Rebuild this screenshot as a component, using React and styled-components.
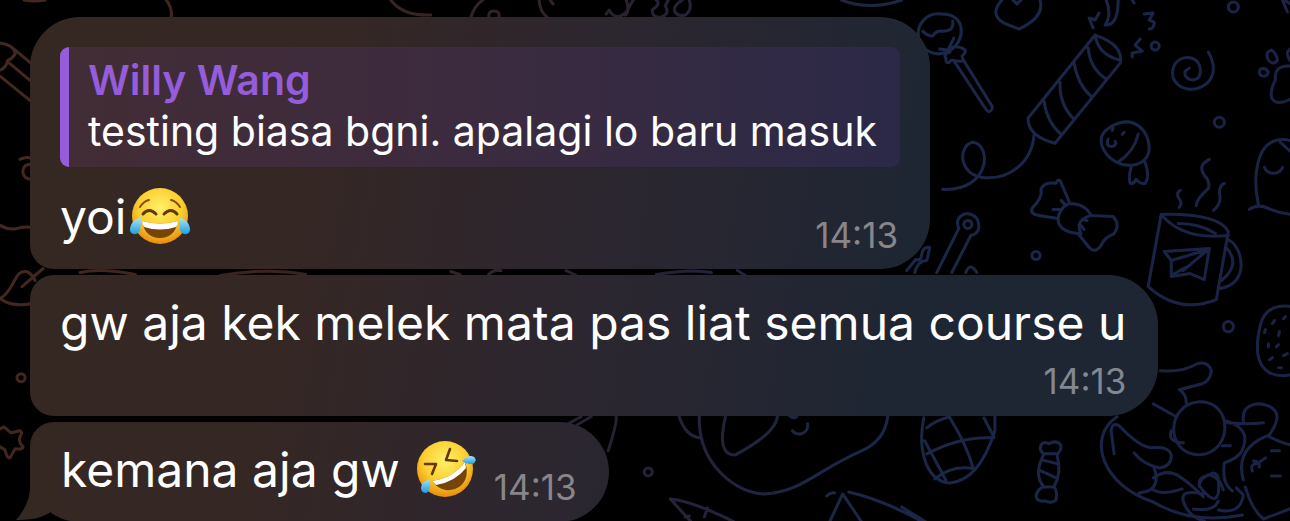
import React from 'react'
import styled, { createGlobalStyle, css } from 'styled-components'

const GlobalStyle = createGlobalStyle`
  * {
    box-sizing: border-box;
  }

  html,
  body {
    background: #000;
    margin: 0;
    overflow: hidden;
  }

  body {
    font-family: Inter, 'Liberation Sans', sans-serif;
  }
`

const Chat = styled.main`
  min-height: 100vh;
  overflow: hidden;
  position: relative;
`

const Wallpaper = styled.svg`
  fill: none;
  height: 100%;
  inset: 0;
  position: absolute;
  stroke: url(#ink);
  stroke-linecap: round;
  stroke-linejoin: round;
  stroke-width: 3;
  width: 100%;
`

const Messages = styled.ol`
  align-items: flex-start;
  display: flex;
  flex-direction: column;
  gap: 6px;
  list-style: none;
  margin: 0;
  padding: 17px 30px 0;
  position: relative;
`

// The gradient is attached to the viewport so that it runs on from bubble to bubble
const bubbleFill = css`
  background: linear-gradient(100deg, #352822 0%, #352724 24%, #2c2630 46%, #1f2633 68%, #1e2533 100%) fixed;
`

const Bubble = styled.li`
  ${bubbleFill}
  border-radius: ${({ $radius }) => $radius};
  color: #fff;
  display: flex;
  flex-direction: ${({ $inline }) => ($inline ? 'row' : 'column')};
  padding: ${({ $inline }) => ($inline ? '0 32px 0 31px' : '0 32px 0 30px')};
  position: relative;
`

const Tail = styled.span`
  ${bubbleFill}
  clip-path: path('M16 40V66C16 76 11 88 2 98C17 98 29 96 38 89V40Z');
  height: 100px;
  left: -16px;
  position: absolute;
  top: 0;
  width: 40px;
`

const Quote = styled.blockquote`
  background: linear-gradient(90deg, #422c35, #3c2b3f 48%, #2b2947);
  border-left: 9px solid #955cdb;
  border-radius: 9px;
  margin: 30px 0 0;
  padding: 9px 23px 9px 19px;
`

const Author = styled.cite`
  color: #955cdb;
  display: block;
  font-size: 41px;
  font-style: normal;
  font-weight: 600;
  line-height: 49px;
`

const QuoteText = styled.p`
  font-size: 41px;
  line-height: 53px;
  margin: 0;
`

const Text = styled.p`
  align-items: center;
  display: flex;
  font-size: 48px;
  gap: ${({ $gap }) => $gap || '0'};
  line-height: 96px;
  margin: 0;
  padding-bottom: 4px;
`

const Time = styled.time`
  color: ${({ $cool }) => ($cool ? '#828790' : '#89868b')};
  font-size: 35px;
  line-height: 40px;
`

const Footer = styled.div`
  align-items: flex-end;
  display: flex;
  justify-content: space-between;
`

const EmojiArt = styled.svg`
  display: block;
  height: 60px;
  width: 60px;
`

function Joy() {
  return (
    <EmojiArt viewBox="0 0 60 60" role="img" aria-label="face with tears of joy">
      <circle cx="30" cy="29" r="28" fill="url(#face)" />
      <path d="M10 20Q14 14 19 13M50 20Q46 14 41 13" fill="none" stroke="#8a4b08" strokeWidth="2" strokeLinecap="round" />
      <path d="M13 27Q19 20 26 27M34 27Q41 20 47 27" fill="none" stroke="#65370c" strokeWidth="3" strokeLinecap="round" />
      <path d="M12 34Q30 39 48 34C46 46 39 51 30 51S14 46 12 34Z" fill="#764309" />
      <path d="M12 34Q30 39 48 34Q48 38 46 40Q30 45 14 40Q12 37 12 34Z" fill="#fff" />
      <path d="M11 31C3 32 0 38 0 43C0 48 8 49 10 43Q11 38 11 31Z" fill="url(#tear)" />
      <path d="M49 31C57 32 60 38 60 43C60 48 52 49 50 43Q49 38 49 31Z" fill="url(#tear)" />
    </EmojiArt>
  )
}

function Rofl() {
  return (
    <EmojiArt viewBox="0 0 60 60" role="img" aria-label="rolling on the floor laughing">
      <circle cx="29" cy="29" r="28" fill="url(#face)" />
      <path d="M9 24L20 24L16 34M34 9L30 20L41 21" fill="none" stroke="#65370c" strokeWidth="2.6" strokeLinecap="round" strokeLinejoin="round" />
      <path d="M16 41Q37 38 49 22C54 36 48 46 39 49S22 49 16 41Z" fill="#764309" />
      <path d="M16 41Q37 38 49 22L50 28Q39 42 20 45Z" fill="#fff" />
      <path d="M46 21Q53 14 58 17C62 20 58 25 54 24Q50 24 46 21Z" fill="url(#tear)" />
      <path d="M14 39Q5 42 5 48C5 53 11 55 13 50Q15 45 14 39Z" fill="url(#tear)" />
    </EmojiArt>
  )
}

const DOTS = [
  [1231, 7, 5],
  [1153, 46, 4],
  [1217, 122, 5],
  [1034, 255, 4],
  [1226, 326, 5],
  [647, 471, 4],
  [21, 377, 4],
]

const DOODLES = [
  // pencil, face and leaf on the left edge
  'M0 43Q16 46 15 54Q12 59 8 60Q6 68 0 70M14 49L32 64M7 61L32 82M0 76L32 102',
  'M20 159Q26 156 31 158M31 164Q22 164 23 173Q24 178 31 179M0 225Q9 230 17 228T32 227',
  'M0 298C15 290 14 269 26 271Q31 272 35 280M0 298Q12 307 32 303M22 286L43 268',
  'M0 428L4 426L11 432L20 430Q23 431 20 436Q18 441 23 446Q23 449 15 448L10 457Q7 458 5 449L0 446',
  // bits over the first bubble
  'M166 0Q172 8 171 17M390 0Q402 16 430 15M24 0Q34 2 45 0M470 17Q474 5 482 0M488 17Q487 11 493 11Q499 11 498 17',
  'M538 0Q539 12 546 17M549 0L552 4M605 14L608 10Q615 22 625 12L632 0M625 0Q629 11 624 15M655 0Q660 4 651 10Q651 18 660 17Q669 14 664 6L667 0M681 0Q673 5 673 10Q675 17 684 15Q691 10 688 0M840 0Q868 11 900 0',
  // lollipop
  'M940 14A20 20 0 1 0 948 50C963 43 966 14 940 14ZM951 21Q952 33 938 31Q933 32 931 36Q925 36 921 31M938 49L946 50L952 38M949 48Q955 45 962 49Q966 51 960 56Q963 62 957 61L950 60Q944 66 944 58Q941 54 948 52ZM953 62L984 109Q987 114 990 109Q991 107 989 104L961 59',
  // heart
  'M1000 0Q987 14 1002 23L1017 29Q1043 17 1038 0M1011 0L1015 4L1019 0',
  // party popper and streamers
  'M1093 35L1026 118Q1026 136 1053 143L1118 63Q1122 45 1093 35ZM1093 35Q1096 55 1118 60M1086 48Q1088 68 1103 78M1072 63Q1076 85 1089 96M1058 82Q1057 104 1072 119M1042 101Q1045 122 1059 134M1032 135C1030 160 1009 181 979 177C957 173 956 145 971 142C990 144 989 191 941 189',
  'M1104 0Q1110 15 1103 25Q1116 26 1116 0M1091 28L1087 18L1093 20L1097 13M1142 14L1151 13L1147 20L1152 22Q1152 29 1147 29M1138 39L1133 45L1140 51L1130 53L1130 57M1130 0L1132 3',
  // spiral
  'M1206 52C1226 86 1181 101 1171 78C1165 54 1200 49 1198 73C1195 85 1180 79 1183 71L1187 68',
  // paw
  'M1269 50Q1274 53 1275 60Q1271 66 1266 60Q1262 52 1269 50ZM1258 69Q1263 67 1266 72Q1264 78 1258 75Q1256 72 1258 69ZM1290 66Q1271 64 1273 80Q1268 88 1269 97Q1273 107 1290 98M1290 48Q1281 51 1288 61M1280 0L1285 12M1282 0L1290 5',
  // fish
  'M1114 124Q1095 132 1100 146C1109 170 1144 171 1147 150C1147 127 1130 117 1114 124ZM1136 134Q1132 151 1117 161M1129 167Q1126 177 1128 183Q1132 184 1134 179Q1138 184 1143 183Q1148 177 1143 162M1106 139Q1103 147 1111 146Q1115 144 1113 141M1110 130L1111 128M1120 134L1122 132',
  // bow
  'M1067 201L1058 180Q1055 179 1054 183Q1042 181 1039 189Q1041 197 1030 208Q1028 214 1037 215L1056 218Q1056 231 1076 233L1087 247Q1094 254 1100 243Q1103 237 1111 234Q1119 225 1111 216L1089 215Q1083 203 1067 203Q1058 207 1056 218M1089 215Q1072 220 1079 233M1059 200L1064 205M1051 209H1059M1080 219L1085 220M1078 224L1082 229',
  // cup
  'M1159 214L1146 286Q1177 314 1214 299L1226 231Q1216 213 1159 214ZM1159 214Q1180 240 1226 235M1176 223Q1198 223 1213 233M1226 239C1241 247 1248 284 1217 288M1224 247Q1239 264 1219 280M1162 251L1207 248L1202 279L1188 273L1169 276L1169 260ZM1169 260L1206 249L1181 270M1169 275L1183 267M1177 207Q1181 203 1176 197Q1174 192 1178 190M1194 205Q1194 199 1206 188Q1208 181 1202 175Q1195 165 1207 159M1211 210Q1220 203 1217 193Q1217 185 1222 183',
  // ghost
  'M1256 204C1250 177 1254 145 1274 140Q1282 138 1290 141M1278 142L1290 153M1262 167Q1264 173 1272 173Q1278 172 1280 167M1247 209Q1255 203 1266 208T1290 214',
  // pin
  'M957 228C951 215 967 208 975 218Q981 232 969 235L950 272M957 228L935 272M966 220A4 4 0 1 0 966 228A4 4 0 1 0 966 220M905 270L914 259Q919 261 920 254Q921 246 928 247L925 260Q916 260 913 272M964 272Q968 261 975 272',
  // strawberry
  'M1290 306Q1264 302 1258 324C1249 361 1261 375 1281 375L1290 374M1272 320L1270 323M1283 316L1281 318M1263 329L1262 332M1277 331L1276 335M1266 343V346M1276 344L1274 346M1270 357L1267 359M1285 353L1281 355M1276 367H1279',
  // citrus
  'M922 417C915 454 927 481 948 482Q977 480 993 430L993 416M925 427Q933 420 948 416M923 440L944 479M948 417Q966 446 972 470M925 453Q959 435 992 437M933 478Q951 463 973 468M982 417L992 436',
  // candy
  'M1042 453Q1037 450 1039 444Q1042 440 1047 443Q1053 439 1058 443Q1061 448 1055 454Q1060 472 1052 486Q1056 491 1054 499Q1049 503 1043 500Q1035 501 1034 495Q1036 487 1042 486Q1031 474 1042 453ZM1042 453H1054M1040 459L1056 463M1039 470L1054 477M1042 486H1052',
  // wreath
  'M1158 370Q1179 372 1195 363Q1206 360 1209 370Q1208 380 1200 383L1177 389Q1184 393 1184 402M1197 401C1231 400 1231 452 1197 454C1162 453 1164 403 1197 401ZM1151 403L1174 416M1115 416C1084 436 1100 485 1151 501Q1190 524 1240 514M1112 453L1109 430Q1110 421 1117 425Q1137 446 1149 447Q1168 445 1169 455Q1169 466 1157 467Q1140 463 1132 452M1152 467Q1158 484 1146 490L1137 492M1151 477Q1165 467 1178 476T1201 496M1150 488Q1160 495 1180 488M1169 430Q1165 441 1181 442',
  'M1224 420Q1248 428 1241 446Q1239 456 1222 462Q1219 482 1230 490M1220 445H1228M1225 422Q1246 424 1261 422M1241 420Q1239 404 1257 403Q1286 407 1267 434Q1232 447 1241 479M1265 435Q1283 444 1290 444M1197 485Q1195 476 1208 474Q1218 478 1221 489M1197 485Q1213 506 1216 492Q1218 472 1211 472Q1196 478 1197 485M1181 500Q1178 488 1201 493M1181 500Q1186 516 1202 520M1216 509Q1238 514 1241 494L1234 487M1191 508Q1212 511 1216 500M1243 486Q1249 508 1261 518L1290 507M1269 450H1277M1269 475H1278M1251 460Q1257 460 1257 466M1263 457L1256 462Q1247 463 1250 470',
  // duck and ribbons under the second bubble
  'M698 415C696 464 736 493 763 493C801 491 817 468 860 450Q883 440 886 416M724 416Q715 455 734 454Q775 432 776 415M678 416Q684 435 698 437M791 430Q794 434 800 433Q807 430 806 423M788 415Q791 418 795 416M565 424L580 416M576 424L590 416M615 416Q616 422 607 450M733 521Q691 500 669 498L690 521M706 507L703 516M684 516L688 515M828 521L841 493L860 521M847 491Q882 499 921 521M825 495Q829 491 833 492M900 506L924 521',
  // slivers between the bubbles
  'M80 272Q100 267 135 274M220 275Q265 267 305 274M450 271L459 274M487 275Q491 269 500 270M565 270L575 275M655 274Q690 268 710 272M736 270L744 275',
]

function Background() {
  return (
    <Wallpaper viewBox="0 0 1290 521" preserveAspectRatio="xMinYMin slice" aria-hidden>
      <defs>
        <linearGradient id="ink" gradientUnits="userSpaceOnUse" x1="0" y1="0" x2="1290" y2="180">
          <stop offset="0" stopColor="#44281f" />
          <stop offset="0.25" stopColor="#3b241f" />
          <stop offset="0.5" stopColor="#272132" />
          <stop offset="0.72" stopColor="#1b2748" />
          <stop offset="1" stopColor="#1a2246" />
        </linearGradient>
        <radialGradient id="face" cx="0.5" cy="0.35" r="0.65">
          <stop offset="0" stopColor="#fff06a" />
          <stop offset="0.6" stopColor="#fbce2e" />
          <stop offset="1" stopColor="#e88b0c" />
        </radialGradient>
        <linearGradient id="tear" x1="0" y1="0" x2="0" y2="1">
          <stop offset="0" stopColor="#a5e2fa" />
          <stop offset="1" stopColor="#1c9fdf" />
        </linearGradient>
      </defs>
      {DOODLES.map((d) => (
        <path key={d} d={d} />
      ))}
      {DOTS.map(([cx, cy, r]) => (
        <circle key={`${cx}-${cy}`} cx={cx} cy={cy} r={r} />
      ))}
    </Wallpaper>
  )
}

const QuotedBubble = styled(Bubble)`
  padding-right: 30px;

  ${Footer} {
    height: 102px;
  }

  ${Time} {
    margin: 0 2px 14px 0;
  }
`

const LongBubble = styled(Bubble)`
  ${Time} {
    align-self: flex-end;
    margin: -14px 0 15px;
  }
`

const LastBubble = styled(Bubble)`
  align-items: flex-end;
  gap: 18px;

  ${Time} {
    margin-bottom: 15px;
  }
`

function App() {
  return (
    <Chat>
      <GlobalStyle />
      <Background />
      <Messages>
        <QuotedBubble $radius="50px 50px 50px 24px">
          <Quote>
            <Author>Willy Wang</Author>
            <QuoteText>testing biasa bgni. apalagi lo baru masuk</QuoteText>
          </Quote>
          <Footer>
            <Text $gap="4px">
              yoi
              <Joy />
            </Text>
            <Time>14:13</Time>
          </Footer>
        </QuotedBubble>
        <LongBubble $radius="24px 50px 50px 24px">
          <Text>gw aja kek melek mata pas liat semua course u</Text>
          <Time $cool>14:13</Time>
        </LongBubble>
        <LastBubble $inline $radius="24px 50px 50px 50px">
          <Tail />
          <Text $gap="16px">
            kemana aja gw
            <Rofl />
          </Text>
          <Time>14:13</Time>
        </LastBubble>
      </Messages>
    </Chat>
  )
}

export default App
